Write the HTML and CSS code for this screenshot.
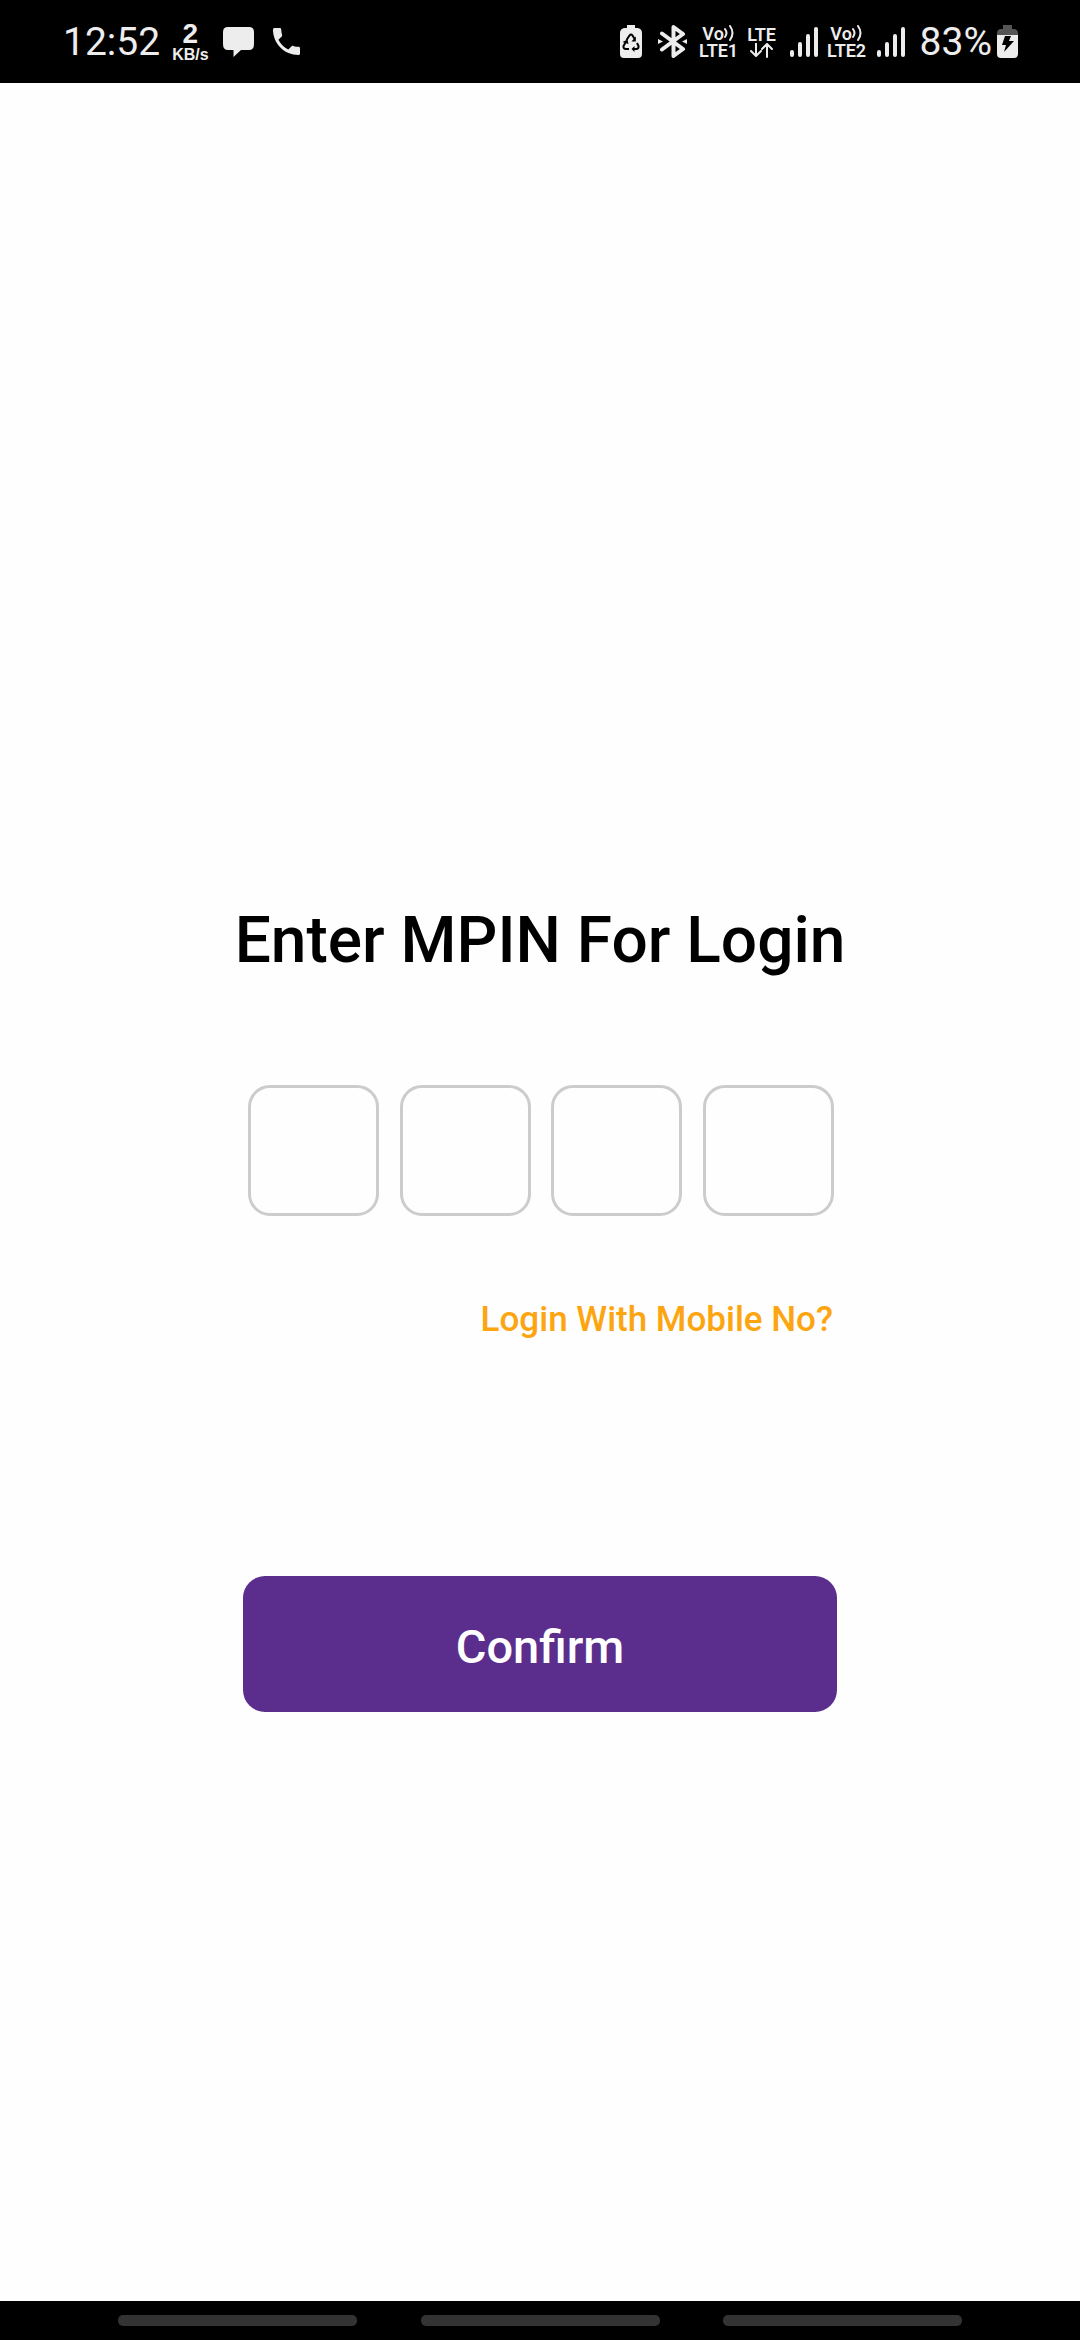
FILE: index.html
```html
<!DOCTYPE html>
<html lang="en">
<head>
<meta charset="utf-8">
<meta name="viewport" content="width=device-width, initial-scale=1">
<title>Enter MPIN For Login</title>
<link rel="stylesheet" href="styles.css">
</head>
<body>
<header class="status-bar">
  <div class="status-left">
    <span class="status-text">12:52</span>
    <span class="speed"><b class="speed-value">2</b><b class="speed-unit">KB/s</b></span>
    <svg class="icon-chat" width="31" height="32" viewBox="0 0 31 32" aria-hidden="true"><path d="M5 1H26Q31 1 31 6V18Q31 24 26 24H18L10.500 31V24H5Q0 24 0 18V6Q0 1 5 1Z"/></svg>
    <svg class="icon-phone" width="27" height="27" viewBox="3 3 18 18" aria-hidden="true"><path d="M6.620 10.790c1.440 2.830 3.760 5.140 6.590 6.590l2.200-2.200c.27-.27.67-.36 1.020-.24 1.120.37 2.330.57 3.570.57.55 0 1 .45 1 1V20c0 .55-.45 1-1 1-9.390 0-17-7.610-17-17 0-.55.45-1 1-1h3.500c.55 0 1 .45 1 1 0 1.250.2 2.450.57 3.570.11.35.03.74-.25 1.020l-2.200 2.200z"/></svg>
  </div>
  <div class="status-right">
    <svg class="icon-saver" width="22" height="33" viewBox="0 0 22 33" aria-hidden="true">
      <path d="M7 0H15V3H18Q22 4 22 8V29Q22 33 18 33H4Q0 33 0 29V8Q0 4 4 3H7Z"/>
      <path class="cut-line" d="M6.500 15 9.500 10.500Q11 8.500 12.500 10.500L15 14.500M17 18 18.500 21Q19 23.500 16.500 24H13M9 24H5.500Q3 23.500 3.500 21L5.500 17.500"/>
      <path class="cut" d="M15.800 11.500V16.500H11.500ZM14.500 21V27L11.500 24ZM2.500 17 7.500 14.500 8.500 19Z"/>
    </svg>
    <svg class="icon-bluetooth" width="29" height="33" viewBox="0 0 29 33" aria-hidden="true">
      <path class="line" d="M4 8.500 25 24 15.500 31V2L25 9 4 24.500"/>
      <path d="M0 14 5 16.500 0 19ZM29 14 24 16.500 29 19Z"/>
    </svg>
    <span class="network volte">
      <span class="network-top">Vo<svg width="11" height="16" viewBox="0 0 11 16" aria-hidden="true"><path class="wave" d="M1 4Q4 8 1 12M6 1Q11 8 6 15"/></svg></span>
      <span>LTE1</span>
    </span>
    <span class="network data">
      <span>LTE</span>
      <svg width="23" height="15" viewBox="0 0 23 15" aria-hidden="true"><path class="arrow" d="M6 0V12M1 8 6 13 11 8M17 14V2M12 6 17 1 22 6"/></svg>
    </span>
    <svg class="signal" width="28" height="30" viewBox="0 0 28 30" aria-hidden="true"><path class="line" d="M2 25V28M10 17V28M18 9V28M26 2V28"/></svg>
    <span class="network volte second">
      <span class="network-top">Vo<svg width="11" height="16" viewBox="0 0 11 16" aria-hidden="true"><path class="wave" d="M1 4Q4 8 1 12M6 1Q11 8 6 15"/></svg></span>
      <span>LTE2</span>
    </span>
    <svg class="signal" width="28" height="30" viewBox="0 0 28 30" aria-hidden="true"><path class="line" d="M2 25V28M10 17V28M18 9V28M26 2V28"/></svg>
    <span class="status-text percent">83%</span>
    <svg class="battery" width="21" height="33" viewBox="0 0 21 33" aria-hidden="true">
      <path class="drained" d="M6 0H15V4H18Q21 5 21 8V11H0V8Q0 5 3 4H6Z"/>
      <path d="M0 10H21V29Q21 33 17 33H4Q0 33 0 29Z"/>
      <path class="cut" d="M8 11H14L12 16H17L7 27 9 20H5Z"/>
    </svg>
  </div>
</header>

<main class="content">
  <h1 class="title">Enter MPIN For Login</h1>
  <form class="login">
    <div class="pins" role="group" aria-label="MPIN">
      <input class="pin" type="password" inputmode="numeric" maxlength="1" aria-label="Digit 1">
      <input class="pin" type="password" inputmode="numeric" maxlength="1" aria-label="Digit 2">
      <input class="pin" type="password" inputmode="numeric" maxlength="1" aria-label="Digit 3">
      <input class="pin" type="password" inputmode="numeric" maxlength="1" aria-label="Digit 4">
    </div>
    <a class="mobile-link" href="#mobile">Login With Mobile No?</a>
    <button class="confirm" type="submit">Confirm</button>
  </form>
</main>

<footer class="nav-bar">
  <span class="nav-hint"></span>
  <span class="nav-hint"></span>
  <span class="nav-hint"></span>
</footer>
</body>
</html>
```

FILE: styles.css
```css
* {
  box-sizing: border-box;
}

body {
  margin: 0;
  min-height: 100vh;
  display: flex;
  flex-direction: column;
  background: #fefefe;
  color: #000;
  font-family: Roboto, "Liberation Sans", sans-serif;
}

svg {
  display: block;
  flex: none;
  fill: currentColor;
}

.status-bar {
  display: flex;
  justify-content: space-between;
  height: 83px;
  padding: 0 62px 0 63px;
  background: #000;
  color: #ededed;
}

.status-left,
.status-right {
  display: flex;
  align-items: center;
}

.status-text {
  font-size: 39px;
  line-height: 48px;
}

.speed {
  display: flex;
  flex-direction: column;
  align-items: center;
  margin-left: 12px;
  font-family: "Liberation Sans", sans-serif;
}

.speed-value {
  font-size: 28px;
  line-height: 26px;
}

.speed-unit {
  font-size: 16px;
  line-height: 16px;
}

.icon-chat {
  margin-left: 14px;
}

.icon-phone {
  margin-left: 19px;
}

.icon-bluetooth {
  margin-left: 16px;
}

.line,
.wave,
.arrow,
.cut-line {
  fill: none;
  stroke: currentColor;
  stroke-width: 4;
  stroke-linecap: round;
  stroke-linejoin: round;
}

.wave {
  stroke-width: 2;
}

.arrow {
  stroke-width: 2;
}

.cut-line {
  stroke: #000;
  stroke-width: 2;
  stroke-linecap: butt;
}

.cut {
  fill: #000;
}

.drained {
  fill: #555;
}

.network {
  display: flex;
  flex-direction: column;
  align-items: center;
  font-size: 18px;
  font-weight: 600;
  line-height: 17px;
}

.network-top {
  display: flex;
  align-items: center;
}

.volte {
  width: 40px;
  margin-left: 12px;
}

.data {
  width: 32px;
  margin-left: 7px;
}

.second {
  margin-left: 9px;
}

.signal {
  margin-left: 12px;
}

.volte + .signal {
  margin-left: 10px;
}

.percent {
  margin-left: 15px;
}

.battery {
  margin-left: 5px;
}

.content {
  flex: 1;
  display: flex;
  flex-direction: column;
  align-items: center;
  justify-content: center;
  padding-top: 230px;
}

.title {
  margin: 0 0 105px;
  font-size: 64px;
  font-weight: 500;
  line-height: 78px;
  text-align: center;
}

.login {
  display: flex;
  flex-direction: column;
  width: 55%;
}

.pins {
  display: flex;
  justify-content: space-between;
  padding: 0 3px 0 5px;
}

.pin {
  width: 131px;
  height: 131px;
  padding: 0;
  border: 3px solid #ccc;
  border-radius: 22px;
  background: transparent;
  font: inherit;
  font-size: 48px;
  text-align: center;
}

.mobile-link {
  align-self: flex-end;
  margin: 83px 4px 235px 0;
  color: #fca510;
  font-size: 35px;
  font-weight: 500;
  line-height: 42px;
  text-decoration: none;
}

.confirm {
  height: 136px;
  padding: 4px 0 0;
  border: 0;
  border-radius: 22px;
  background: #5b2e8d;
  color: #fff;
  font: inherit;
  font-size: 47px;
  font-weight: 500;
}

.nav-bar {
  display: flex;
  justify-content: space-between;
  align-items: center;
  height: 39px;
  padding: 0 118px;
  background: #000;
}

.nav-hint {
  width: 239px;
  height: 11px;
  border-radius: 5px;
  background: #333;
}
```
